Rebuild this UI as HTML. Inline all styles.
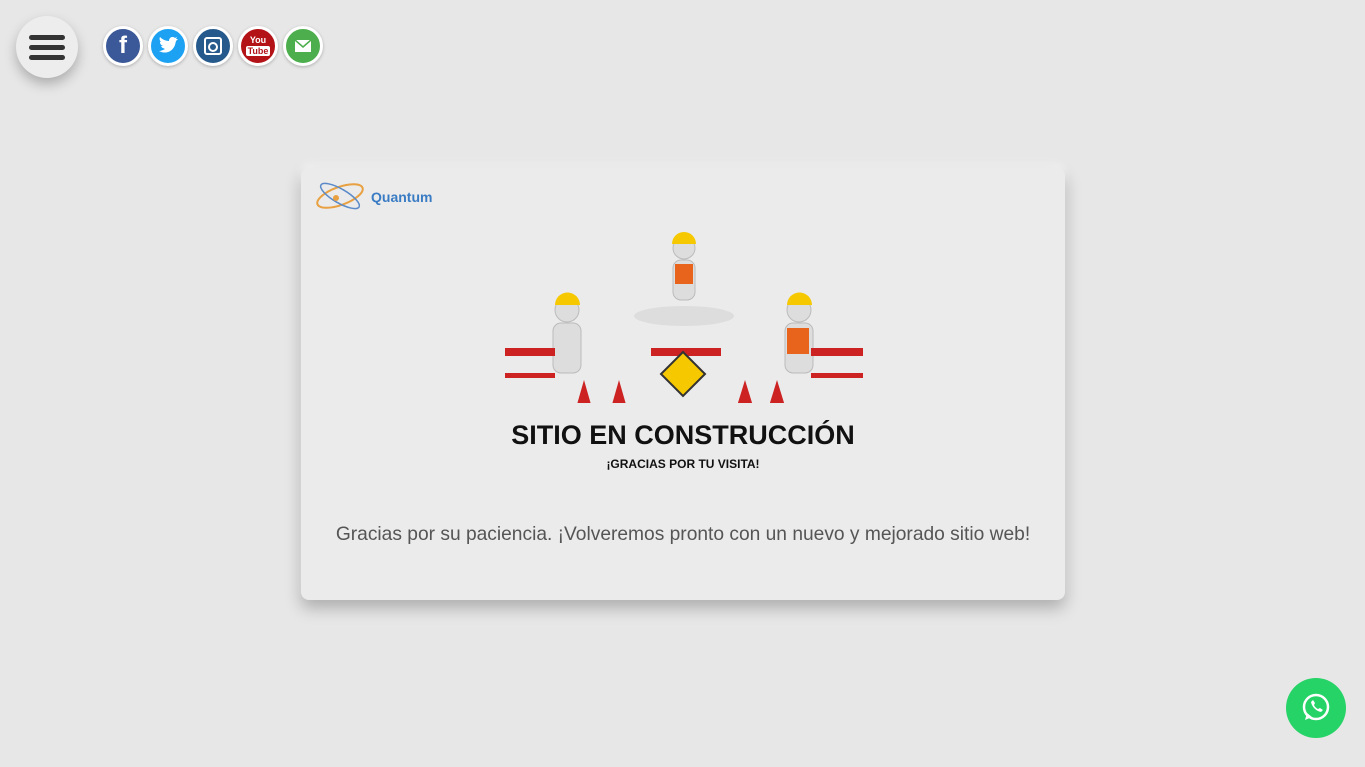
<!DOCTYPE html>
<html><head><meta charset="utf-8"><style>
body{margin:0;width:1365px;height:767px;background:#e7e7e7;font-family:"Liberation Sans",sans-serif;position:relative;overflow:hidden}
.menu{position:absolute;left:16px;top:16px;width:62px;height:62px;border-radius:50%;background:#ededed;box-shadow:0 6px 12px rgba(0,0,0,.25)}
.menu i{position:absolute;left:13px;width:36px;height:5px;border-radius:3px;background:#333}
.soc{position:absolute;top:26px;width:34px;height:34px;border-radius:50%;border:3px solid #fff;box-shadow:0 1px 3px rgba(0,0,0,.25);color:#fff;text-align:center;font-weight:bold}
.card{position:absolute;left:301px;top:168px;width:764px;height:432px;background:#ebebeb;border-radius:8px;box-shadow:0 8px 16px rgba(0,0,0,.25),0 -4px 8px rgba(255,255,255,.6)}
.wa{position:absolute;left:1286px;top:678px;width:60px;height:60px;border-radius:50%;background:#25d366}
</style></head><body>
<div class="menu"><i style="top:19px"></i><i style="top:29px"></i><i style="top:39px"></i></div>
<div class="soc" style="left:103px;background:#3b5998;font-size:24px;line-height:34px">f</div>
<div class="soc" style="left:148px;background:#1da1f2"><svg width="34" height="34" viewBox="0 0 34 34"><path d="M8 22c5 3 13 2 16-6l1-4 2-2-2 0 1-2-2 1c-2-2-6-1-6 3-4 0-7-2-9-4-1 2 0 4 1 5l-1 0c0 2 1 3 3 4h-2c1 2 2 2 4 3-2 1-4 2-6 2z" fill="#fff"/></svg></div>
<div class="soc" style="left:193px;background:#265a8c"><svg width="34" height="34"><rect x="9" y="9" width="16" height="16" rx="2" fill="none" stroke="#fff" stroke-width="2"/><circle cx="17" cy="18" r="4" fill="none" stroke="#fff" stroke-width="2"/></svg></div>
<div class="soc" style="left:238px;background:#b31217;font-size:9px;line-height:11px"><div style="padding-top:6px">You<br><span style="background:#fff;color:#b31217;padding:0 2px;border-radius:2px">Tube</span></div></div>
<div class="soc" style="left:283px;background:#4cae4c"><svg width="34" height="34"><rect x="9" y="11" width="16" height="12" fill="#fff"/><path d="M9 11l8 7 8-7" fill="none" stroke="#4cae4c" stroke-width="1.5"/></svg></div>
<div class="card">
<svg style="position:absolute;left:14px;top:10px" width="140" height="40"><ellipse cx="25" cy="18" rx="24" ry="9" fill="none" stroke="#e8a040" stroke-width="2" transform="rotate(-20 25 18)"/><ellipse cx="25" cy="18" rx="22" ry="7" fill="none" stroke="#5a8ac8" stroke-width="1.5" transform="rotate(30 25 18)"/><circle cx="21" cy="20" r="3" fill="#e8a040"/><text x="56" y="24" font-size="14" font-weight="bold" fill="#3a7cc4" font-family="Liberation Sans">Quantum</text></svg>
<svg style="position:absolute;left:200px;top:60px" width="365" height="175">
<ellipse cx="183" cy="88" rx="50" ry="10" fill="#ddd"/>
<g fill="#ddd" stroke="#bbb"><circle cx="183" cy="20" r="11"/><rect x="172" y="32" width="22" height="40" rx="8"/><circle cx="66" cy="82" r="12"/><rect x="52" y="95" width="28" height="50" rx="8"/><circle cx="298" cy="82" r="12"/><rect x="284" y="95" width="28" height="50" rx="8"/></g>
<g fill="#f5c800"><path d="M171 16a12 12 0 0 1 24 0z"/><path d="M54 77a12 12 0 0 1 25 0z"/><path d="M286 77a12 12 0 0 1 25 0z"/></g>
<g fill="#e8641c"><rect x="174" y="36" width="18" height="20"/><rect x="286" y="100" width="22" height="26"/></g>
<g fill="#c22"><rect x="4" y="120" width="50" height="8"/><rect x="4" y="145" width="50" height="5"/><rect x="150" y="120" width="70" height="8"/><rect x="310" y="120" width="52" height="8"/><rect x="310" y="145" width="52" height="5"/><path d="M75 180l8-28 8 28z"/><path d="M110 180l8-28 8 28z"/><path d="M236 178l8-26 8 26z"/><path d="M268 178l8-26 8 26z"/></g>
<path d="M182 124l22 22-22 22-22-22z" fill="#f5c800" stroke="#333" stroke-width="2"/>
</svg>
<div style="position:absolute;left:0;width:764px;top:252px;text-align:center;font-size:27px;font-weight:bold;color:#111">SITIO EN CONSTRUCCIÓN</div>
<div style="position:absolute;left:0;width:764px;top:289px;text-align:center;font-size:12px;font-weight:bold;color:#111">¡GRACIAS POR TU VISITA!</div>
<div style="position:absolute;left:0;width:764px;top:356px;text-align:center;font-size:19.2px;color:#555">Gracias por su paciencia. ¡Volveremos pronto con un nuevo y mejorado sitio web!</div>
</div>
<div class="wa"><svg width="60" height="60"><circle cx="30" cy="29" r="12" fill="none" stroke="#fff" stroke-width="2.5"/><path d="M19 42l2-7 5 4z" fill="#fff"/><path d="M25 24c1 5 5 9 10 10l2-2-3-2-2 1c-2-1-3-2-4-4l1-2-2-3z" fill="#fff"/></svg></div>
</body></html>
